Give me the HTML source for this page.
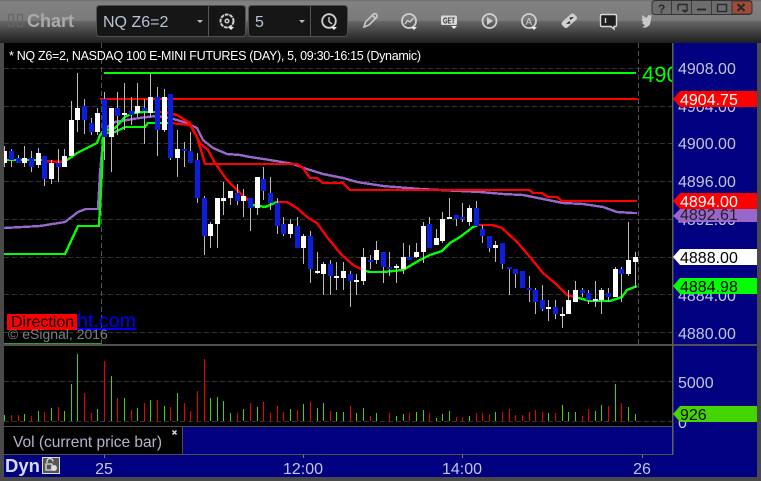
<!DOCTYPE html>
<html><head><meta charset="utf-8"><style>
html,body{margin:0;padding:0;background:#4a4a4a}
#r{position:relative;width:761px;height:481px;overflow:hidden;background:#4a4a4a;font-family:"Liberation Sans",sans-serif}
svg{position:absolute;left:0;top:0}
text{font-family:"Liberation Sans",sans-serif}
</style></head><body><div id="r">
<svg width="761" height="481" viewBox="0 0 761 481">
<defs>
<linearGradient id="tb" x1="0" y1="0" x2="0" y2="1"><stop offset="0" stop-color="#6e6e6e"/><stop offset=".05" stop-color="#828282"/><stop offset=".48" stop-color="#7a7a7a"/><stop offset=".49" stop-color="#666"/><stop offset="1" stop-color="#1e1e1e"/></linearGradient>
<clipPath id="ch"><rect x="4" y="43" width="669" height="301"/></clipPath>
</defs>
<rect width="761" height="43" fill="url(#tb)"/>
<g fill="none" stroke="#666" stroke-width="1.3"><rect x="8.5" y="14.5" width="5" height="12"/><rect x="17.5" y="14.5" width="5" height="12"/></g>
<text x="27" y="27" font-size="18" font-weight="bold" fill="#aaa">Chart</text>
<!-- selector boxes -->
<rect x="96.500" y="5.500" width="149" height="31" rx="3" fill="#161616" stroke="#505050"/>
<rect x="248.500" y="5.500" width="99" height="31" rx="3" fill="#161616" stroke="#505050"/>
<path d="M208.500 6V36M310.500 6V36" stroke="#555"/>
<text x="103" y="27" font-size="16" fill="#b8c4d8">NQ Z6=2</text>
<text x="255" y="27" font-size="16" fill="#b8c4d8">5</text>
<path d="M197 20h6l-3 3zM299 20h6l-3 3z" fill="#bbb"/>
<!-- gear -->
<g fill="none" stroke="#d0d0d0"><circle cx="227" cy="21" r="6.500" stroke-width="2" stroke-dasharray="3.800 .9"/><circle cx="227" cy="21" r="1.800" stroke-width="1.500"/></g>
<path d="M228 27h6l-3 3z" fill="#eee"/>
<!-- clock -->
<g fill="none" stroke="#d0d0d0" stroke-width="1.800"><circle cx="329" cy="21" r="6.800"/><path d="M329 17v4.500l3 2.500" stroke-width="1.400"/></g>
<path d="M331 27h6l-3 3z" fill="#eee"/>
<!-- pencil -->
<path d="M364 27l1.500-5 8-8q2-1 3 .5t.5 2.500l-8 8zM372 15l3.500 3.500" fill="none" stroke="#c8c8c8" stroke-width="1.600"/>
<!-- chart circle -->
<g fill="none" stroke="#d0d0d0" stroke-width="1.800"><circle cx="409" cy="21" r="7"/><path d="M405 24l2.500-3.500 2.500 1.500 3.500-4" stroke-width="1.400"/></g>
<path d="M411 27h6l-3 3z" fill="#eee"/>
<!-- GET -->
<rect x="441" y="15.500" width="16" height="9.500" rx="1.500" fill="#d8d8d8"/>
<text x="443" y="23.500" font-size="8" font-weight="bold" fill="#333" textLength="12" lengthAdjust="spacingAndGlyphs">GET</text>
<path d="M451 26h6l-3 3z" fill="#eee"/>
<!-- play -->
<circle cx="489.500" cy="21" r="7" fill="none" stroke="#d0d0d0" stroke-width="1.800"/><path d="M487 17l6 4-6 4z" fill="#d0d0d0"/>
<!-- A -->
<circle cx="529" cy="21" r="7" fill="none" stroke="#d0d0d0" stroke-width="1.800"/>
<text x="525.500" y="25" font-size="10" fill="#d0d0d0">A</text>
<path d="M531 27h6l-3 3z" fill="#eee"/>
<!-- diamond -->
<path d="M562 22l9-8q2-1 3 0l2.500 2.500q1 1.500 0 3l-9 8q-1.500 1-3 0l-2.500-2.500q-1-1.500 0-3z" fill="#d0d0d0"/>
<path d="M566 24l3.500-3 1 2.500zM574 17l-3.500 3-1-2.500z" fill="#222"/>
<!-- speech -->
<path d="M602 14.500h13q1.500 0 1.500 1.500v9q0 1.500-1.500 1.500h-1v2.500l-3-2.500h-9q-1.500 0-1.500-1.500v-9q0-1.500 1.500-1.500z" fill="#1e1e1e" stroke="#d8d8d8" stroke-width="1.400"/>
<path d="M605.500 18v5" stroke="#d8d8d8" stroke-width="1.400"/>
<!-- twitter -->
<path d="M642 15l4.500 3 2-3 3 .5-1 7q-1 4-5 5-2 .5-3-.5l2.500-1.500-3-2.500 1-1-1.500-2.500 1-.5z" fill="#c8c8c8"/>
<!-- window buttons -->
<rect x="652" y=".5" width="100" height="14" rx="3" fill="#6d6d6d" stroke="#333"/>
<path d="M671.500 1V14M691.500 1V14M711.500 1V14" stroke="#3a3a3a"/>
<path d="M732 1h17q3 0 3 3v7q0 3-3 3h-17z" fill="#a34a3a" stroke="#333"/>
<text x="658" y="13" font-size="12" font-weight="bold" fill="#2a2a2a">?</text>
<path d="M678 4.500h9v6h-5m-4 0v-6" fill="none" stroke="#2a2a2a" stroke-width="1.400"/><path d="M682 10h6l-3 3z" fill="#2a2a2a"/>
<path d="M697 9.500h9" stroke="#2a2a2a" stroke-width="2"/>
<rect x="717.500" y="4.500" width="9" height="7" fill="none" stroke="#2a2a2a" stroke-width="1.400"/>
<path d="M737.500 4l7 7m0-7l-7 7" stroke="#2a2a2a" stroke-width="2.200"/>

<!-- panels -->
<rect x="4" y="43" width="669" height="411" fill="#000"/>
<rect x="673" y="43" width="84" height="412" fill="#000080"/>
<rect x="182" y="427" width="491" height="27" fill="#000080"/>
<rect x="4" y="455" width="753" height="22" fill="#000080"/>

<!-- grid -->
<g stroke="#333" stroke-dasharray="5 3" shape-rendering="crispEdges">
<path d="M4 68.500H677M4 106.500H677M4 143.500H677M4 181.500H677M4 219.500H677M4 257.500H677M4 294.500H677M4 332.500H677M4 381.500H677M4 421.500H677"/>
<path d="M101.500 43V344M638.500 43V344" stroke="#555"/>
</g>

<g clip-path="url(#ch)">
<text x="642" y="82" font-size="22" fill="#00ff00">4904</text>
<g fill="none" stroke-width="2.400" shape-rendering="crispEdges" stroke-linejoin="round">
<path d="M104 73H636" stroke="#00ff00"/>
<path d="M100 99H638" stroke="#f00"/>
<!-- purple -->
<path d="M4 228L40 226 65 222 78 212 86 209 98 209 100 173 103 140 107 127 115 122 133 119 147 117 157 116 170 118 187 123 197 128 203 140 213 148 227 154 240 155 250 157 270 160 293 164 307 169 323 174 343 178 357 182 383 186 420 189 480 192 503 194 523 195 543 199 563 203 583 204 603 207 617 212 633 213 637 213" stroke="#9966cc"/>
<!-- slow -->
<path d="M4 254H65L78 226H99L102 170 103 137 107 133 115 132 125 127H145L148 123H170" stroke="#00ff00"/>
<path d="M170 123L190 125 197 137 203 157 205 164H297L303 168 310 178H317L323 183H343L350 190H530L533 193H542L548 197H557L562 201H637" stroke="#f00"/>
<!-- fast -->
<path d="M5 160H45" stroke="#00ff00"/>
<path d="M45 161L63 162" stroke="#f00"/>
<path d="M63 161L67 160 77 153 87 148 97 143 100 135 104 131 115 128 125 117 133 113 143 112H160" stroke="#00ff00"/>
<path d="M160 112H165L177 115 190 123 200 143 208 150 215 163 227 180 240 193 253 204" stroke="#f00"/>
<path d="M253 205L265 207 277 202" stroke="#00ff00"/>
<path d="M277 202L287 202 297 208 307 217 317 223 327 237 340 253 353 265 365 271" stroke="#f00"/>
<path d="M365 271L370 272H383L403 270 420 260 430 255 442 251 450 243 460 237 473 227 478 225" stroke="#00ff00"/>
<path d="M478 225H492L502 228 517 242 530 257 543 273 557 285 567 295 575 297" stroke="#f00"/>
<path d="M575 297L590 301H610L622 297 627 290 637 286" stroke="#00ff00"/>
</g>
<!-- wicks -->
<path stroke="#bbb" fill="none" shape-rendering="crispEdges" d="M4.500 146V167M11.500 149V167M18.500 155V163M24.500 146V167M31.500 151V172M38.500 148V168M44.500 156V186M51.500 160V184M58.500 149V182M64.500 149V167M71.500 101V156M77.500 73V132M84.500 99V134M91.500 118V135M97.500 108V135M104.500 92V160M111.500 108V172M117.500 92V135M124.500 83V130M131.500 97V125M137.500 83V117M144.500 99V144M150.500 73V117M157.500 87V156M164.500 89V132M170.500 94V160M177.500 130V177M184.500 142V167M190.500 132V163M197.500 153V203M204.500 196V255M210.500 222V248M217.500 198V248M223.500 182V215M230.500 191V205M237.500 184V205M243.500 189V217M250.500 198V231M257.500 177V215M263.500 167V200M270.500 177V210M277.500 198V234M283.500 217V236M290.500 219V238M297.500 217V248M303.500 234V264M310.500 231V283M317.500 252V274M323.500 262V295M330.500 260V295M336.500 262V290M343.500 262V290M350.500 271V307M356.500 274V295M363.500 248V285M370.500 255V269M376.500 241V264M383.500 252V283M389.500 252V276M396.500 264V283M403.500 243V274M409.500 245V260M416.500 243V258M423.500 222V263M429.500 217V248M436.500 229V245M442.500 212V243M449.500 198V219M456.500 215V226M462.500 203V222M469.500 205V226M476.500 201V226M482.500 225V243M489.500 236V252M495.500 241V262M502.500 243V269M509.500 267V295M515.500 269V288M522.500 271V288M529.500 276V302M535.500 288V314M542.500 285V311M548.500 300V321M555.500 300V319M562.500 307V328M568.500 290V314M575.500 281V302M582.500 288V297M588.500 290V304M595.500 281V307M601.500 288V314M608.500 288V302M615.500 267V297M621.500 267V302M628.500 222V276M635.500 252V288"/>
<!-- blue bodies -->
<path fill="#0a1edc" shape-rendering="crispEdges" d="M9 151h5V160h-5zM16 158h5V163h-5zM29 158h5V167h-5zM42 156h5V179h-5zM56 163h5V167h-5zM82 106h5V120h-5zM89 123h5V132h-5zM102 99h5V137h-5zM115 108h5V116h-5zM129 111h5V115h-5zM142 108h5V111h-5zM155 97h5V130h-5zM168 94h5V158h-5zM182 149h5V151h-5zM188 151h5V163h-5zM195 160h5V198h-5zM202 198h5V236h-5zM235 193h5V201h-5zM248 198h5V208h-5zM261 179h5V191h-5zM268 193h5V203h-5zM275 203h5V226h-5zM281 224h5V234h-5zM295 226h5V248h-5zM308 236h5V269h-5zM328 264h5V276h-5zM348 274h5V281h-5zM368 260h5V262h-5zM381 252h5V267h-5zM387 267h5V269h-5zM407 257h5V260h-5zM427 224h5V248h-5zM454 215h5V219h-5zM460 217h5V219h-5zM474 208h5V226h-5zM480 229h5V236h-5zM487 236h5V248h-5zM500 243h5V264h-5zM507 267h5V269h-5zM513 269h5V274h-5zM520 271h5V288h-5zM527 288h5V290h-5zM533 290h5V302h-5zM540 300h5V309h-5zM553 307h5V314h-5zM580 290h5V293h-5zM586 293h5V300h-5zM606 293h5V297h-5zM619 269h5V274h-5z"/>
<!-- white bodies -->
<path fill="#fff" shape-rendering="crispEdges" d="M2 151h5V163h-5zM22 158h5V163h-5zM36 153h5V165h-5zM49 163h5V179h-5zM62 156h5V167h-5zM69 120h5V156h-5zM75 108h5V120h-5zM95 113h5V132h-5zM109 108h5V137h-5zM122 113h5V115h-5zM135 106h5V113h-5zM148 97h5V113h-5zM162 97h5V130h-5zM175 149h5V158h-5zM208 224h5V236h-5zM215 198h5V224h-5zM221 198h5V201h-5zM228 191h5V198h-5zM241 196h5V201h-5zM255 177h5V208h-5zM288 224h5V234h-5zM301 236h5V248h-5zM315 271h5V273h-5zM321 264h5V274h-5zM334 276h5V278h-5zM341 271h5V278h-5zM354 280h5V282h-5zM361 257h5V281h-5zM374 250h5V260h-5zM394 266h5V268h-5zM401 257h5V269h-5zM414 252h5V257h-5zM421 226h5V252h-5zM434 238h5V245h-5zM440 219h5V241h-5zM447 217h5V219h-5zM467 208h5V222h-5zM493 245h5V248h-5zM546 307h5V309h-5zM560 314h5V316h-5zM566 300h5V314h-5zM573 290h5V302h-5zM593 299h5V301h-5zM599 290h5V300h-5zM613 269h5V297h-5zM626 260h5V274h-5zM633 257h5V262h-5z"/>
</g>

<!-- branding -->
<rect x="7" y="314" width="70" height="16" fill="#f00"/>
<text x="77" y="327" font-size="19.700" fill="#0000ff" text-decoration="underline">ht.com</text>
<text x="11" y="327" font-size="16" fill="#000">Direction</text>
<text x="8" y="339" font-size="14" fill="#808080">© eSignal, 2016</text>
<path d="M4 343.500H102" stroke="#2c9f2c"/>
<text x="9" y="60" font-size="12.500" fill="#fff" textLength="412" lengthAdjust="spacing">* NQ Z6=2, NASDAQ 100 E-MINI FUTURES (DAY), 5, 09:30-16:15 (Dynamic)</text>

<!-- volume -->
<path stroke="#44d400" fill="none" shape-rendering="crispEdges" d="M4.500 421V415M24.500 421V414M38.500 421V411M51.500 421V408M64.500 421V411M71.500 421V384M77.500 421V354M97.500 421V409M111.500 421V376M124.500 421V398M137.500 421V408M150.500 421V400M164.500 421V406M177.500 421V393M210.500 421V398M217.500 421V397M223.500 421V401M230.500 421V413M243.500 421V409M257.500 421V407M290.500 421V409M303.500 421V404M317.500 421V408M323.500 421V403M336.500 421V412M343.500 421V412M356.500 421V413M363.500 421V408M376.500 421V413M396.500 421V416M403.500 421V414M416.500 421V412M423.500 421V410M436.500 421V418M442.500 421V414M449.500 421V411M469.500 421V416M495.500 421V412M548.500 421V413M562.500 421V405M568.500 421V412M575.500 421V412M595.500 421V411M601.500 421V405M615.500 421V384M628.500 421V407M635.500 421V414"/>
<path stroke="#ee0000" fill="none" shape-rendering="crispEdges" d="M11.500 421V415M18.500 421V415M31.500 421V416M44.500 421V412M58.500 421V407M84.500 421V393M91.500 421V413M104.500 421V361M117.500 421V398M131.500 421V410M144.500 421V403M157.500 421V400M170.500 421V407M184.500 421V403M190.500 421V411M197.500 421V391M204.500 421V359M237.500 421V413M250.500 421V403M263.500 421V402M270.500 421V413M277.500 421V406M283.500 421V412M297.500 421V410M310.500 421V402M330.500 421V411M350.500 421V406M370.500 421V416M389.500 421V413M409.500 421V413M429.500 421V413M456.500 421V417M462.500 421V417M476.500 421V413M482.500 421V413M489.500 421V414M502.500 421V412M509.500 421V409M515.500 421V415M522.500 421V415M529.500 421V412M535.500 421V410M542.500 421V412M555.500 421V413M582.500 421V416M588.500 421V409M608.500 421V406M621.500 421V403"/>

<rect x="4" y="344" width="753" height="2" fill="#505050"/>
<rect x="4" y="426" width="669" height="1" fill="#505050"/>
<rect x="182" y="427" width="1" height="27" fill="#505050"/>
<rect x="4" y="454" width="669" height="1" fill="#505050"/>
<rect x="672" y="43" width="1.500" height="412" fill="#606060"/>
<text x="13" y="447" font-size="16" fill="#b4b4cc" textLength="149" lengthAdjust="spacingAndGlyphs">Vol (current price bar)</text>
<path d="M172.500 430.500l4 4m0-4l-4 4" stroke="#ddd" stroke-width="1.500"/>

<!-- axis labels -->
<g font-size="16" fill="#c4c4dc">
<text x="678" y="74">4908.00</text>
<text x="678" y="112">4904.00</text>
<text x="678" y="149">4900.00</text>
<text x="678" y="187">4896.00</text>
<text x="678" y="225">4892.00</text>
<text x="678" y="301">4884.00</text>
<text x="678" y="339">4880.00</text>
<text x="678" y="388">5000</text>
<text x="678" y="428">0</text>
</g>
<path d="M673 99l7-8h77v16h-77z" fill="#f00"/>
<text x="680" y="105" font-size="16" fill="#fff">4904.75</text>
<path d="M673 201l7-8h77v16h-77z" fill="#f00"/>
<text x="680" y="207" font-size="16" fill="#fff">4894.00</text>
<path d="M680 209h77v13h-77l-7-6z" fill="#9966cc"/>
<text x="680" y="220" font-size="16" fill="#222">4892.61</text>
<path d="M673 257l7-8h77v16h-77z" fill="#fff"/>
<text x="680" y="263" font-size="16" fill="#000">4888.00</text>
<path d="M673 286l7-8h77v16h-77z" fill="#00ff00"/>
<text x="680" y="292" font-size="16" fill="#000">4884.98</text>
<path d="M673 414l7-8h77v16h-77z" fill="#44d400"/>
<text x="680" y="420" font-size="16" fill="#000">926</text>

<!-- time axis -->
<path d="M104.500 455V458M303.500 455V458M462.500 455V458M642.500 455V458" stroke="#777"/>
<g font-size="16" fill="#c4c4e4" text-anchor="middle">
<text x="104" y="474">25</text>
<text x="303" y="474">12:00</text>
<text x="462" y="474">14:00</text>
<text x="642" y="474">26</text>
</g>
<text x="5" y="472" font-size="18.500" font-weight="bold" fill="#d8d8ec">Dyn</text>
<rect x="42.500" y="457.500" width="17" height="16" fill="#555" stroke="#ddd"/>
<path d="M47 463v-1.500a3 3 0 0 1 6 0M46 464h6v6h-6z" fill="none" stroke="#ddd" stroke-width="1.300"/>
<circle cx="54" cy="468" r="3" fill="#ddd"/>
</svg>
</div></body></html>
